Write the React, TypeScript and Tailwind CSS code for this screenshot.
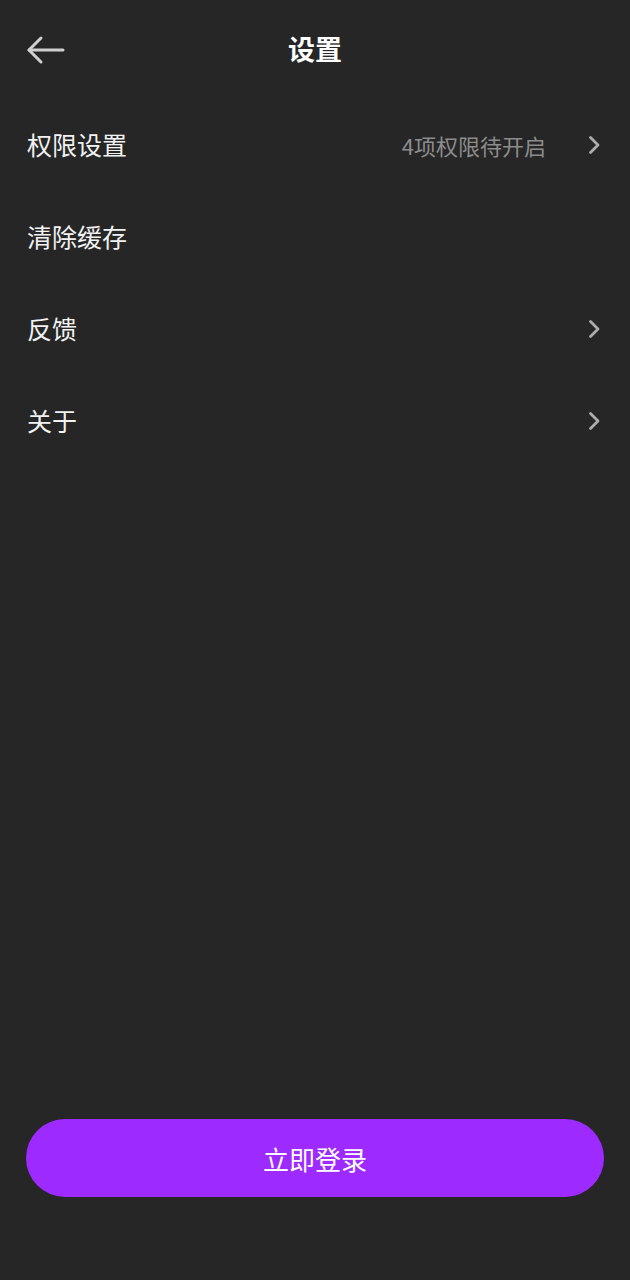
const rows = [
  { label: "权限设置", hint: "4项权限待开启", arrow: true },
  { label: "清除缓存", hint: "", arrow: false },
  { label: "反馈", hint: "", arrow: true },
  { label: "关于", hint: "", arrow: true },
]

const font = { fontFamily: '"Noto Sans CJK SC", "Noto Sans", sans-serif' }

function Chevron() {
  return (
    <svg width="14" height="20" viewBox="0 0 14 20" fill="none" stroke="#adadad" strokeWidth="2.8" strokeLinecap="round" strokeLinejoin="round">
      <path d="M3.5 2.5L11 10l-7.5 7.5" />
    </svg>
  )
}

export default function App() {
  return (
    <div className="min-h-screen w-full bg-[#262626] flex flex-col text-white" style={font}>
      <header className="relative h-[99px] flex items-center justify-center">
        <button className="absolute left-[26px] top-[32px] w-[40px] h-[36px] flex items-center">
          <svg width="40" height="30" viewBox="0 0 40 30" fill="none" stroke="#cfcfcf" strokeWidth="3" strokeLinecap="round" strokeLinejoin="round">
            <path d="M3 15h34" />
            <path d="M15 3L3 15l12 12" />
          </svg>
        </button>
        <h1 className="text-[27px] font-bold leading-none -mt-[2px]">设置</h1>
      </header>

      <ul>
        {rows.map((r) => (
          <li key={r.label} className="h-[92px] flex items-center pl-[27px] pr-[29px]">
            <span className="text-[25px] text-[#f2f2f2] flex-1">{r.label}</span>
            {r.hint && <span className="text-[22px] text-[#8c8c8c] mr-[41px]">{r.hint}</span>}
            {r.arrow && <Chevron />}
          </li>
        ))}
      </ul>

      <div className="mt-auto px-[26px] pb-[83px]">
        <button className="w-full h-[78px] rounded-full bg-[#9d2bff] text-[26px] text-white">立即登录</button>
      </div>
    </div>
  )
}
